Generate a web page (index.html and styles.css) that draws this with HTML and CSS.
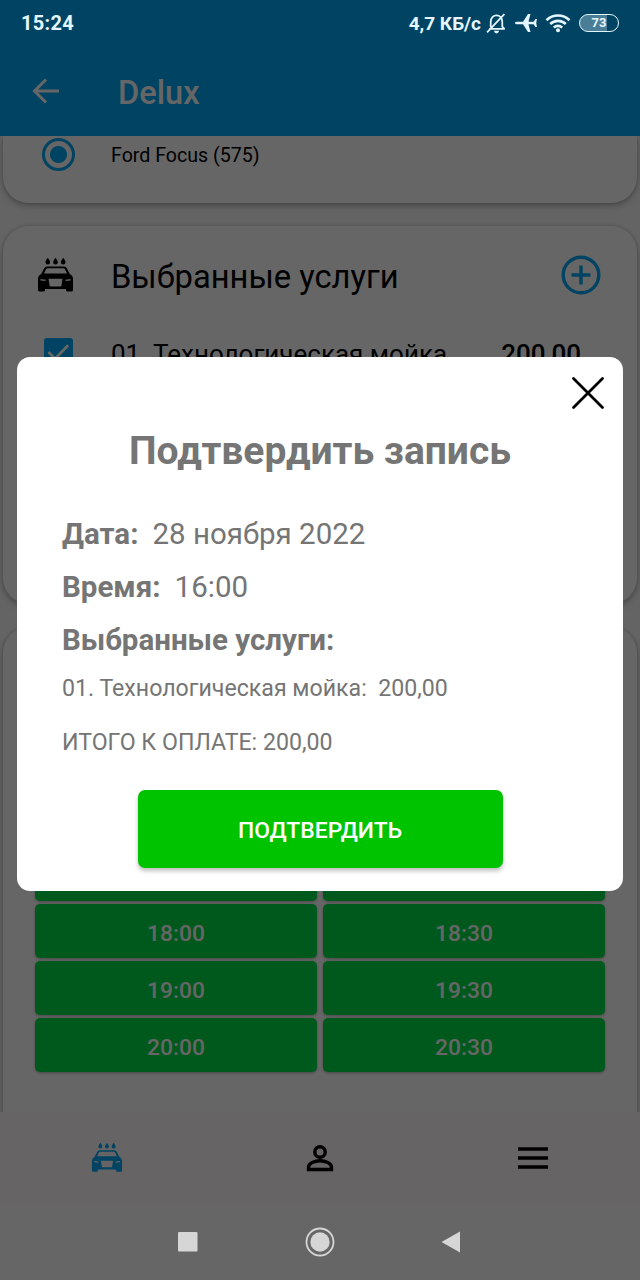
FILE: index.html
```html
<!DOCTYPE html>
<html lang="ru">
<head>
    <meta charset="UTF-8">
    <meta name="viewport" content="width=device-width, initial-scale=1.0">
    <title>Delux</title>
    <link rel="stylesheet" href="styles.css">
</head>
<body>
    <svg class="sprite" width="0" height="0">
        <symbol id="car-wash" viewBox="0 0 36 36">
            <path d="M10.3 .8c1.500 2 2.300 3.400 2.300 4.400a2.300 2.300 0 0 1-4.600 0c0-1 .8-2.400 2.300-4.400zM18 .8c1.500 2 2.300 3.400 2.300 4.400a2.300 2.300 0 0 1-4.600 0c0-1 .8-2.400 2.300-4.400zM25.700 .8c1.500 2 2.300 3.400 2.300 4.400a2.300 2.300 0 0 1-4.600 0c0-1 .8-2.400 2.300-4.400z"/>
            <path fill-rule="evenodd" d="M9.500 9.500h17q2 0 2.800 1.800l3 5.700q3.200 1.500 3.200 5V33q0 1.500-1.500 1.500h-4q-1.500 0-1.500-1.500v-1H7.500v1q0 1.500-1.500 1.500H2Q.5 34.500 .5 33V22q0-3.500 3.200-5l3-5.700q.8-1.800 2.800-1.800zM10 11.300q-1 0-1.400.8L6.500 16.500h23l-2.100-4.400q-.4-.8-1.400-.8zM3 22v1.500l5 .6v-1.400zM33 22v1.500l-5 .6v-1.400zM11 21.800l1 6.600q.2 1 1.200 1h9.600q1 0 1.200-1l1-6.600z"/>
        </symbol>
    </svg>

    <div class="screen">
        <header class="toolbar">
            <svg class="back" viewBox="0 0 28 26"><path d="M14 1.500L2.500 13 14 24.500M2.500 13H27"/></svg>
            <h1>Delux</h1>
        </header>

        <main class="content">
            <section class="card car-card">
                <span class="radio"></span>
                <span class="car-name">Ford Focus (575)</span>
            </section>

            <section class="card services-card">
                <div class="card-head">
                    <svg class="car-icon"><use href="#car-wash"/></svg>
                    <h2>Выбранные услуги</h2>
                    <svg class="add" viewBox="0 0 40 40"><circle cx="20" cy="20" r="17.800"/><path d="M20 10.500v19M10.500 20h19"/></svg>
                </div>
                <div class="service">
                    <svg class="check" viewBox="0 0 30 30"><rect width="30" height="30" rx="3"/><path d="M4.500 14.500l7 7L25 7.500"/></svg>
                    <span class="service-name">01. Технологическая мойка</span>
                    <b class="service-price">200,00</b>
                </div>
            </section>

            <section class="card slots-card">
                <div class="slots">
                    <button>17:00</button>
                    <button>17:30</button>
                    <button>18:00</button>
                    <button>18:30</button>
                    <button>19:00</button>
                    <button>19:30</button>
                    <button>20:00</button>
                    <button>20:30</button>
                </div>
            </section>
        </main>

        <nav class="tabs">
            <a class="tab active"><svg class="tab-car"><use href="#car-wash"/></svg></a>
            <a class="tab"><svg class="tab-user" viewBox="0 0 28 28"><circle cx="14" cy="8" r="5.200"/><path d="M2.500 25.500v-2.500c0-3.800 6-6.200 11.500-6.200s11.500 2.400 11.500 6.200v2.500z"/></svg></a>
            <a class="tab"><svg class="tab-menu" viewBox="0 0 30 22"><path d="M0 2h30M0 11h30M0 20h30"/></svg></a>
        </nav>
        <div class="system-space"></div>

        <div class="scrim"></div>

        <div class="modal">
            <svg class="close" viewBox="0 0 34 34"><path d="M2.500 2.500l29 29M31.500 2.500l-29 29"/></svg>
            <h3>Подтвердить запись</h3>
            <p class="line"><b>Дата:</b><span>28 ноября 2022</span></p>
            <p class="line"><b>Время:</b><span>16:00</span></p>
            <p class="line"><b>Выбранные услуги:</b></p>
            <p class="item">01. Технологическая мойка:&nbsp; 200,00</p>
            <p class="total">ИТОГО К ОПЛАТЕ: 200,00</p>
            <button class="confirm">ПОДТВЕРДИТЬ</button>
        </div>

        <div class="status-bar">
            <span class="clock">15:24</span>
            <span class="speed">4,7 КБ/с</span>
            <svg class="bell" viewBox="0 0 20 20"><path d="M3 15.200h15M4.500 13.500V8.500C4.500 4.500 7 2.300 10 2.300s5.500 2.200 5.500 6.200v4.500l2 2.200M1 18.500L17.500 1"/><path class="solid" d="M7.500 17h5q-.5 2.500-2.500 2.500t-2.500-2.500z"/></svg>
            <svg class="plane" viewBox="0 0 22 20"><path d="M0 10q0-1.300 1.800-1.300H8L13 1h2.500l-2 7.700h5L20.500 6H22l-.8 4 .8 4h-1.500l-2-2.700h-5L15.500 19H13L8 11.300H1.800Q0 11.300 0 10z"/></svg>
            <svg class="wifi" viewBox="0 0 26 20"><path d="M1.500 7.200a16.500 16.500 0 0 1 23 0M5.200 11a11.200 11.200 0 0 1 15.600 0M8.800 14.600a6 6 0 0 1 8.400 0"/><circle cx="13" cy="17.200" r="2"/></svg>
            <span class="battery">73</span>
        </div>

        <div class="system-nav">
            <svg viewBox="0 0 32 32"><rect x="6" y="6" width="19.500" height="19.500" rx="1"/></svg>
            <svg viewBox="0 0 32 32"><circle cx="16" cy="16" r="9.700"/><circle class="ring" cx="16" cy="16" r="13.500"/></svg>
            <svg viewBox="0 0 32 32"><path d="M5.500 16L24 5.500v21z"/></svg>
        </div>
    </div>
</body>
</html>
```

FILE: styles.css
```css
* {
    box-sizing: border-box;
}
body {
    margin: 0;
    font-family: Roboto, "Noto Sans", sans-serif;
    color: #000;
}
h1, h2, h3, p {
    margin: 0;
}
button {
    border: none;
    font-family: inherit;
}
svg {
    display: block;
    flex: none;
}
.sprite {
    position: absolute;
}
.screen {
    position: relative;
    display: flex;
    flex-direction: column;
    width: 640px;
    height: 1280px;
    overflow: hidden;
    background: #fafafa;
}

/* toolbar */
.toolbar {
    display: flex;
    align-items: center;
    height: 136px;
    flex: none;
    padding: 46px 32px 0;
    background: #03a9f4;
    color: #fff;
}
.back {
    width: 28px;
    height: 26px;
    margin-right: 58px;
    fill: none;
    stroke: #fff;
    stroke-width: 3;
}
.toolbar h1 {
    font-size: 32.6px;
    font-weight: 500;
    padding-top: 4px;
}

/* cards */
.content {
    display: flex;
    flex-direction: column;
    gap: 23px;
    height: 976px;
    flex: none;
    padding: 0 3px;
    overflow: hidden;
}
.card {
    flex: none;
    background: #fff;
    border-radius: 26px;
    box-shadow: 0 3px 7px rgba(0, 0, 0, 0.25), 0 0 4px rgba(0, 0, 0, 0.15);
}
.car-card {
    display: flex;
    align-items: center;
    height: 67px;
    padding: 0 39px 30px;
    border-radius: 0 0 26px 26px;
}
.radio {
    width: 33px;
    height: 33px;
    margin-right: 36px;
    border: 3px solid #03a9f4;
    border-radius: 50%;
    background: radial-gradient(circle, #03a9f4 8px, transparent 9px);
}
.car-name {
    font-size: 19.6px;
    padding-top: 2px;
}
.services-card {
    height: 378px;
    padding: 29px 36px 0 34px;
}
.card-head, .service {
    display: flex;
    align-items: center;
}
.card-head {
    height: 40px;
}
.car-icon {
    width: 37px;
    height: 36px;
    margin-right: 37px;
}
.card-head h2 {
    flex: 1;
    font-size: 32.7px;
    font-weight: 400;
    padding-top: 3px;
}
.add {
    width: 40px;
    height: 40px;
    fill: none;
    stroke: #03a9f4;
    stroke-width: 3.4;
}
.service {
    height: 31px;
    margin-top: 43px;
    padding: 0 20px 0 7px;
    font-size: 26px;
}
.check {
    width: 29px;
    height: 29px;
    margin-bottom: 2px;
    margin-right: 38px;
    fill: #03a9f4;
}
.check path {
    fill: none;
    stroke: #fff;
    stroke-width: 2.8;
}
.service-name {
    flex: 1;
    white-space: nowrap;
}
.service-price {
    font-weight: 500;
}

/* time slots */
.slots-card {
    height: 560px;
    padding: 220px 32px 0;
}
.slots {
    display: grid;
    grid-template-columns: 1fr 1fr;
    gap: 3px 6px;
}
.slots button {
    height: 54px;
    padding: 5px 0 0;
    border-radius: 5px;
    background: #00de46;
    box-shadow: 0 1px 3px rgba(0, 0, 0, 0.3);
    color: #fff;
    font-size: 22.8px;
    font-weight: 500;
}

/* bottom tabs */
.tabs {
    display: grid;
    grid-template-columns: repeat(3, 1fr);
    height: 92px;
    flex: none;
    padding-bottom: 1px;
    background: #fffafa;
}
.tab {
    display: flex;
    align-items: center;
    justify-content: center;
}
.tab.active {
    fill: #03a9f4;
}
.tab-car {
    width: 32px;
    height: 31px;
}
.tab-user {
    width: 28px;
    height: 28px;
    fill: none;
    stroke: #000;
    stroke-width: 3.4;
}
.tab-menu {
    width: 30px;
    height: 22px;
    stroke: #000;
    stroke-width: 3.4;
}
.system-space {
    flex: 1;
    background: #fff;
}
.scrim {
    position: absolute;
    inset: 0;
    background: rgba(0, 0, 0, 0.6);
}

/* confirmation dialog */
.modal {
    position: absolute;
    top: 357px;
    left: 17px;
    width: 606px;
    height: 534px;
    padding: 71px 45px 0 45px;
    border-radius: 13px;
    background: #fff;
    color: #757575;
}
.close {
    position: absolute;
    top: 19px;
    right: 18.5px;
    width: 34px;
    height: 34px;
    stroke: #000;
    stroke-width: 2.8;
    stroke-linecap: round;
}
.modal h3 {
    height: 46px;
    line-height: 46px;
    font-size: 39px;
    font-weight: 700;
    text-align: center;
    white-space: nowrap;
}
.line {
    display: flex;
    gap: 14px;
    height: 35px;
    line-height: 35px;
    margin-bottom: 18px;
    font-size: 29.5px;
}
.modal h3 + .line {
    margin-top: 43px;
}
.item, .total {
    height: 27px;
    line-height: 27px;
    font-size: 23.15px;
}
.line + .item {
    margin-top: -1px;
}
.total {
    margin-top: 27px;
}
.confirm {
    display: block;
    width: 365px;
    height: 78px;
    margin: 34px auto 0;
    padding-top: 3px;
    border-radius: 7px;
    background: #00c300;
    box-shadow: 0 3px 4px rgba(0, 0, 0, 0.25);
    color: #fff;
    font-size: 22.9px;
    font-weight: 500;
}

/* system chrome */
.status-bar {
    position: absolute;
    top: 0;
    left: 0;
    display: flex;
    align-items: center;
    width: 640px;
    height: 46px;
    padding: 0 21px;
    color: #e4f6ff;
    font-size: 20px;
    font-weight: 700;
    fill: #e4f6ff;
}
.clock {
    flex: 1;
    letter-spacing: 0.3px;
}
.speed {
    margin-right: 5px;
    font-size: 19px;
}
.bell {
    width: 21px;
    height: 21px;
    margin-right: 8px;
    fill: none;
    stroke: #e4f6ff;
    stroke-width: 1.7;
}
.bell .solid {
    fill: #e4f6ff;
    stroke: none;
}
.plane {
    width: 22px;
    height: 20px;
    margin-right: 8px;
}
.wifi {
    width: 26px;
    height: 20px;
    margin-right: 8px;
}
.wifi path {
    fill: none;
    stroke: #e4f6ff;
    stroke-width: 2.6;
}
.battery {
    width: 40px;
    height: 18px;
    border: 1.5px solid #e4f6ff;
    border-radius: 9px;
    background: linear-gradient(90deg, #4a7d96 72%, transparent 72%);
    font-size: 13px;
    line-height: 16px;
    text-align: center;
}
.system-nav {
    position: absolute;
    left: 0;
    bottom: 0;
    display: flex;
    align-items: center;
    justify-content: center;
    gap: 100px;
    width: 640px;
    height: 76px;
    fill: #d6d6d6;
}
.system-nav svg {
    width: 32px;
    height: 32px;
}
.system-nav .ring {
    fill: none;
    stroke: #d6d6d6;
    stroke-width: 1.8;
}
```
